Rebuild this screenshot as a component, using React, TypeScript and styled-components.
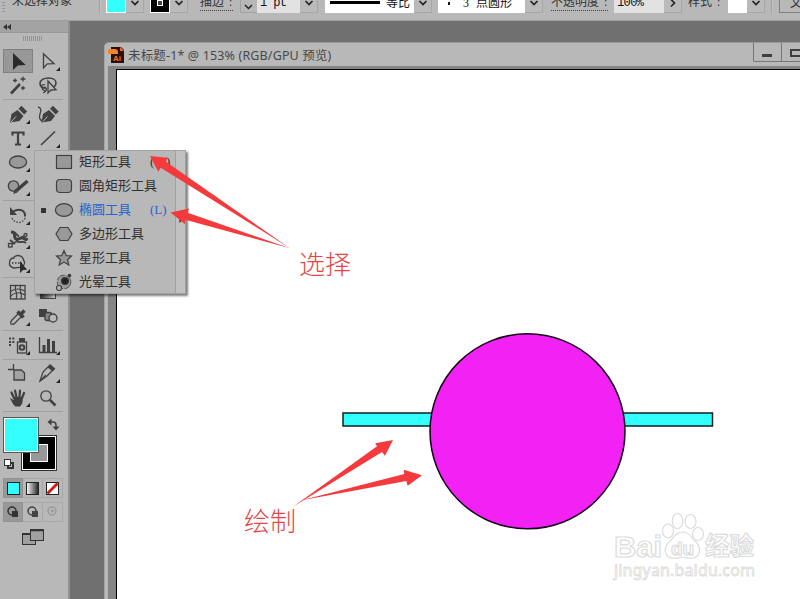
import React from "react";
import styled, { createGlobalStyle } from "styled-components";

const INK = "#404040";
const PANEL = "#b8b8b8";
const CYAN = "#33ffff";
const SONG = `"Liberation Serif", "Noto Sans CJK SC", serif`;

const GlobalStyle = createGlobalStyle`
  * { box-sizing: border-box; }
  body { margin: 0; background: #707070; overflow: hidden; }
  svg { display: block; flex: none; }
`;

const Screen = styled.div`
  position: relative;
  display: flex;
  flex-direction: column;
  width: 800px;
  height: 599px;
  overflow: hidden;
  background: #707070;
  color: #333;
  font-family: "Noto Sans", "Noto Sans CJK SC", sans-serif;
`;

/* ---------- options bar ---------- */

const OptionsBar = styled.header`
  display: flex;
  align-items: flex-end;
  flex: none;
  height: 21px;
  padding-bottom: 7px;
  overflow: hidden;
  background: ${PANEL};
  border-bottom: 1px solid #a0a0a0;
`;

const BarGrip = styled.div`
  flex: none;
  width: 3px;
  height: 20px;
  margin: 0 7px 0 2px;
  background: repeating-linear-gradient(#929292 0 1px, transparent 1px 3px);
`;

const BarText = styled.span<{ $w: number; $gap?: number; $lift?: number; $dotted?: boolean }>`
  flex: none;
  width: ${(p) => p.$w}px;
  height: 19px;
  margin-left: ${(p) => p.$gap ?? 0}px;
  margin-bottom: ${(p) => p.$lift ?? 2}px;
  border-bottom: ${(p) => (p.$dotted ? "1px dotted #444" : "0")};
  font: 12px/20px ${SONG};
  word-spacing: 2px;
  white-space: nowrap;
`;

const BarDivider = styled.div<{ $gap: number }>`
  flex: none;
  width: 2px;
  height: 22px;
  margin: 0 0 -1px ${(p) => p.$gap}px;
  background: #a2a2a2;
  border-right: 1px solid #c0c0c0;
`;

const Swatch = styled.div<{ $gap: number; $color: string }>`
  display: flex;
  align-items: center;
  justify-content: center;
  flex: none;
  width: 20px;
  height: 20px;
  margin-left: ${(p) => p.$gap}px;
  background: ${(p) => p.$color};
  border: 1px solid #fff;
`;

const StrokeHole = styled.div`
  width: 6px;
  height: 6px;
  background: #444;
  border: 1px solid #fff;
`;

const ArrowBox = styled.div`
  display: flex;
  align-items: center;
  justify-content: center;
  flex: none;
  width: 18px;
  height: 21px;
  background: #bababa;
  border: 1px solid #a6a6a6;
  border-left: 0;
`;

const Field = styled.div<{ $w: number; $gap?: number; $bg?: string }>`
  display: flex;
  align-items: center;
  flex: none;
  width: ${(p) => p.$w}px;
  height: 20px;
  margin-left: ${(p) => p.$gap ?? 0}px;
  background: ${(p) => p.$bg ?? "#fff"};
  color: #111;
  font: 12px/18px ${SONG};
  white-space: pre;
`;

const MonoValue = styled.span<{ $pad: number }>`
  padding: 0 0 0 ${(p) => p.$pad}px;
  font-family: "Liberation Mono", monospace;
  font-size: 12px;
  letter-spacing: -0.6px;
`;

const BrushLine = styled.div`
  width: 50px;
  height: 3px;
  margin: 0 6px 1px 5px;
  background: #000;
`;

const FieldText = styled.span<{ $gap?: number }>`
  margin: 0 0 1px ${(p) => p.$gap ?? 0}px;
`;

const Dot = styled.span`
  width: 2px;
  height: 3px;
  margin-left: 10px;
  background: #111;
`;

const EdgeButton = styled.div`
  flex: none;
  width: 30px;
  height: 21px;
  margin-left: 6px;
  padding-left: 10px;
  border: 1px solid #808080;
  font: 12px/20px ${SONG};
`;

/* ---------- tool panel ---------- */

const Body = styled.div`
  display: flex;
  flex: 1;
  min-height: 0;
`;

const ToolPanel = styled.aside`
  display: flex;
  flex-direction: column;
  flex: none;
  width: 70px;
  background: ${PANEL};
  border-right: 2px solid #909090;
`;

const PanelHeader = styled.div`
  display: flex;
  align-items: center;
  height: 12px;
  padding-left: 3px;
  background: #a3a3a3;
  border-bottom: 1px solid #999;
`;

const PanelGrip = styled.div`
  width: 19px;
  height: 5px;
  margin: 3px 0 8px 23px;
  background: repeating-linear-gradient(90deg, #939393 0 1px, transparent 1px 2px);
`;

const ToolGroup = styled.div`
  display: grid;
  grid-template-columns: 30px 30px;
  grid-auto-rows: 24px;
  margin-left: 3px;
`;

const ToolCell = styled.div<{ $active?: boolean }>`
  background: ${(p) => (p.$active ? "#989898" : "transparent")};
  box-shadow: ${(p) => (p.$active ? "inset 0 0 0 1px #808080" : "none")};
`;

const Rule = styled.div<{ $h: number }>`
  flex: none;
  width: 60px;
  height: ${(p) => p.$h}px;
  margin-left: 3px;
  background: linear-gradient(#a0a0a0, #a0a0a0) 0 2px / 100% 1px no-repeat;
`;

const ModeRow = styled.div`
  display: flex;
  flex: none;
  height: 20px;
  margin: 0 0 4px 3px;
`;

const ModeButton = styled.div<{ $active?: boolean }>`
  display: flex;
  align-items: center;
  justify-content: center;
  width: 20px;
  border: 1px solid ${(p) => (p.$active ? "#929292" : "#a9a9a9")};
  border-left-width: ${(p) => (p.$active ? 1 : 0)}px;
  background: ${(p) => (p.$active ? "#989898" : "transparent")};
`;

const ScreenMode = styled.div`
  margin: 3px 0 0 22px;
`;

/* ---------- document window ---------- */

const Workspace = styled.main`
  display: flex;
  flex: 1;
  min-width: 0;
  padding: 21px 0 0 34px;
`;

const DocWindow = styled.section`
  display: flex;
  flex-direction: column;
  flex: 1;
  background: ${PANEL};
  border-top: 1px solid #989898;
  border-left: 1px solid #a4a4a4;
  border-top-left-radius: 5px;
  overflow: hidden;
`;

const TitleBar = styled.div`
  display: flex;
  align-items: flex-start;
  flex: none;
  height: 23px;
  padding-left: 3px;
`;

const TitleIcon = styled.svg`
  margin-top: 1px;
`;

const Title = styled.h1`
  flex: 1;
  margin: 3px 0 0 3px;
  color: #484848;
  font-size: 12.5px;
  font-weight: 400;
  line-height: 20px;
  letter-spacing: 0.15px;
  white-space: nowrap;
`;

const WindowControls = styled.div`
  display: flex;
  width: 47px;
  height: 19px;
  border: 1px solid #777;
  border-width: 0 0 1px 1px;
  border-bottom-left-radius: 2px;
`;

const ControlCell = styled.div`
  width: 28px;
  border-right: 1px solid #777;
`;

const Canvas = styled.div`
  flex: 1;
  margin-left: 3px;
  padding: 3px 0 0 8px;
  background: #858585;
`;

const Artboard = styled.div`
  width: 684px;
  height: 532px;
  background: #fff;
  border: 1px solid #000;
  border-width: 1px 0 0 1px;
`;

/* ---------- floating parts ---------- */

const Flyout = styled.div`
  position: absolute;
  left: 34px;
  top: 150px;
  display: flex;
  width: 152px;
  height: 144px;
  background: ${PANEL};
  border: 1px solid #a2a2a2;
  box-shadow: 2px 2px 2px rgba(0, 0, 0, 0.5);
`;

const FlyoutList = styled.ul`
  flex: 1;
  margin: -1px 0 0;
  padding: 0;
  list-style: none;
`;

const FlyoutItem = styled.li<{ $active?: boolean }>`
  display: flex;
  align-items: center;
  height: 24px;
  color: ${(p) => (p.$active ? "#2a62cf" : "#303030")};
  font: 13px/24px ${SONG};
  white-space: nowrap;
`;

const Marker = styled.span<{ $on?: boolean }>`
  width: 5px;
  height: 5px;
  margin: 0 8px 0 6px;
  background: ${(p) => (p.$on ? "#333" : "transparent")};
`;

const ToolName = styled.span`
  margin-left: 5px;
`;

const Shortcut = styled.span`
  margin-left: 19px;
`;

const TearOff = styled.div`
  width: 10px;
  background: #c1c1c1;
  border-left: 1px solid #a0a0a0;
`;

const Arrows = styled.svg`
  position: absolute;
  left: 0;
  top: 0;
  pointer-events: none;
`;

const Note = styled.div<{ $x: number; $y: number }>`
  position: absolute;
  left: ${(p) => p.$x}px;
  top: ${(p) => p.$y}px;
  color: #e54545;
  font: 300 26px/30px "Noto Sans CJK SC", sans-serif;
  white-space: nowrap;
`;

const Watermark = styled.div`
  position: absolute;
  left: 608px;
  top: 508px;
`;

const Chevron = () => (
  <svg width="10" height="8" viewBox="0 0 10 8">
    <path d="M1.500 2 5 5.500 8.500 2" fill="none" stroke="#222" strokeWidth="1.700" />
  </svg>
);

const Corner = () => <path d="M27 18v4h-4z" fill="#222" />;

type IconProps = { children?: React.ReactNode; corner?: boolean };
const Icon = ({ children, corner }: IconProps) => (
  <svg width="30" height="24" viewBox="0 0 30 24" fill="none" stroke={INK} strokeWidth="1.300">
    {children}
    {corner && <g stroke="none"><Corner /></g>}
  </svg>
);

const PenNib = () => (
  <>
    <path d="M7 20.500 8.500 12l6-4 6 6-4 5z" fill={INK} stroke="none" />
    <path d="m15.500 6.800 3-3 5.700 5.700-3 3z" fill={INK} stroke="none" />
    <path d="m8 20 5-5.500" stroke={PANEL} strokeWidth="1" />
  </>
);

const groups: { gap: number; tools: React.ReactNode[] }[] = [
  {
    gap: 5,
    tools: [
      <Icon><path d="M10 4v17l4.700-4.500 8-.5z" fill="#2b2b2b" stroke="none" /></Icon>,
      <Icon corner><path d="M10.500 4.800v14l3.800-3.900 6.700-.2z" /></Icon>,
      <Icon>
        <path d="M8 20.500 17 11" strokeWidth="2.600" />
        <path d="M12 5.500v4M10 7.500h4M20 3.500v5M17.500 6h5M20 13v4M18 15h4" />
      </Icon>,
      <Icon>
        <path d="M13 14.500c-4 .7-6-1.200-6-4C7 7 11 5 15.500 5s7.500 2 7.500 5c0 2-1 3-2 3.500" strokeWidth="1.600" />
        <path d="M12 12c-4-2-5 4-1 3s2.500 4-1 5M9 16l3 2" />
        <path d="M15 8v12l3-3 5-.3z" fill={PANEL} />
      </Icon>,
    ],
  },
  {
    gap: 5,
    tools: [
      <Icon corner><PenNib /></Icon>,
      <Icon>
        <g transform="translate(1.500)"><PenNib /></g>
        <path d="M5 5c4 1 3 4 2 7s-1 6 3 7" />
      </Icon>,
      <Icon corner><path d="M9.500 9.500V6.500h11v3M15 6.500v12M12 18.500h6" strokeWidth="2.200" /></Icon>,
      <Icon corner><path d="M8 19 22 5.500" strokeWidth="1.600" /></Icon>,
      <Icon corner><ellipse cx="15" cy="12" rx="8.600" ry="6" fill="#999" /></Icon>,
      <Icon />,
      <Icon corner>
        <circle cx="10.500" cy="12" r="5.200" fill="#999" />
        <path d="M13 17 24.500 7" strokeWidth="3.500" />
        <path d="m10 20 4.500-1.500-2.500-3z" fill={INK} stroke="none" />
      </Icon>,
      <Icon />,
    ],
  },
  {
    gap: 5,
    tools: [
      <Icon corner>
        <path d="M10 8.500c7-4 12.500-.5 12 5" strokeWidth="2" />
        <path d="M7 4v8h7z" fill={INK} stroke="none" />
        <path d="M22 15c-2 6-11 6-13.500-1" strokeDasharray="1.500 1.500" />
      </Icon>,
      <Icon />,
      <Icon corner>
        <path d="M8 5c6 0 2 6 5 7s4-2 7-1 3 3 4 0" strokeWidth="3" />
        <path d="M10 5c4 0 3 4 6 4M13 14c4 3 7-1 10 2M7 13l5 4" strokeWidth="1.800" />
        <path d="M7 19 22 8" />
        <rect x="5.500" y="16.500" width="3.500" height="3.500" fill={PANEL} /><circle cx="22.500" cy="8" r="1.500" fill={PANEL} />
      </Icon>,
      <Icon />,
      <Icon corner>
        <path d="M11 6c4-3 9-1 9.500 3 3 4-1 8-6 7.500C10 18 6 15.500 6.500 12 6.500 8.500 8 7 11 7z" />
        <path d="M9 12h10" strokeDasharray="1.500 1.500" />
        <path d="M17 10v12l3-3 4-.2z" fill="#2b2b2b" stroke="none" />
      </Icon>,
      <Icon />,
    ],
  },
  {
    gap: 5,
    tools: [
      <Icon>
        <rect x="7.500" y="5.500" width="14.500" height="13.500" />
        <path d="M7 12c5-4 9-4 15-1M7 17c4-5 10-5 15-2M13 5c-3 5 3 8 0 14M18 5c-3 5 2 9 0 14" strokeWidth="1.200" />
      </Icon>,
      <svg width="30" height="24">
        <defs><linearGradient id="mesh"><stop stopColor="#333" /><stop offset="1" stopColor="#ddd" /></linearGradient></defs>
        <rect x="7.500" y="5.500" width="15" height="13" fill="url(#mesh)" stroke={INK} />
      </svg>,
      <Icon corner>
        <path d="M8 20c-1-2 0-3 1-4l7-7 3 3-7 7c-1 1-2 2-4 1z" />
        <path d="m14.500 7.500 6 6M18 10l3.500-3.500" strokeWidth="3.500" />
      </Icon>,
      <Icon>
        <rect x="6" y="5" width="8" height="8" fill={INK} stroke="none" />
        <rect x="12" y="8.500" width="6.500" height="8" rx="2" fill="#858585" />
        <circle cx="20" cy="14" r="4" fill={PANEL} />
      </Icon>,
    ],
  },
  {
    gap: 4,
    tools: [
      <Icon corner>
        <path d="M6 5.500h6M6 9h6M6 12h2" strokeDasharray="2 1.300" strokeWidth="2" />
        <rect x="14.500" y="9" width="9" height="11" /><path d="M16 7h6" strokeWidth="4" />
        <circle cx="19" cy="14.500" r="2.300" strokeWidth="2" />
      </Icon>,
      <Icon corner><path d="M6.500 4v15.500H24" /><path d="M11 19v-7M15.500 19V6M20.500 19V8" strokeWidth="3" /></Icon>,
    ],
  },
  {
    gap: 7,
    tools: [
      <Icon><path d="M5 8.500h6M10.500 3v5" /><path d="M11 9h7.500l3 3v7H11z" fill="#a3a3a3" /></Icon>,
      <Icon corner><path d="m7 20 3-9 7-7 4 4-7 7z" /><path d="m7 20 6-6" /><path d="m16 5 5 4" strokeWidth="4" /></Icon>,
      <Icon corner>
        <path d="M11 13 8.500 7.500M13.500 12 12 5.500M16.500 12l.5-6.500M19 13l2-5" strokeWidth="2.200" strokeLinecap="round" />
        <path d="m7 13 4 2v-3h8.500c1 5-1 9-3 9.500h-4C10 20 9 17 7 13z" fill={INK} stroke="none" />
      </Icon>,
      <Icon><circle cx="13" cy="11" r="5.200" /><path d="m17 15 5.500 5.500" strokeWidth="2.600" /></Icon>,
    ],
  },
];

const FillStroke = () => (
  <svg width="66" height="62" viewBox="0 416 66 62">
    <rect x="21.500" y="435.500" width="35" height="35" fill="#000" stroke="#333" />
    <rect x="22.500" y="436.500" width="33" height="33" fill="none" stroke="#fff" />
    <rect x="30.500" y="444.500" width="17" height="17" fill="#989898" stroke="#fff" />
    <rect x="3.500" y="417.500" width="35" height="35" fill={CYAN} stroke="#555" />
    <rect x="4.500" y="418.500" width="33" height="33" fill="none" stroke="#fff" />
    <path d="M50 422h3q3 0 3 3v3" fill="none" stroke={INK} strokeWidth="1.500" />
    <path d="m47.500 422 4-3.500v7zM52.500 426.500h7L56 430.500z" fill={INK} />
    <rect x="8" y="463" width="5" height="5" fill="none" stroke="#333" strokeWidth="2" />
    <rect x="4.500" y="459.500" width="6" height="6" fill="#fff" stroke="#333" />
  </svg>
);

const ModeGlyph = ({ color, solid }: { color: string; solid?: boolean }) => (
  <svg width="14" height="14">
    <circle cx="6" cy="6" r="4" fill="none" stroke={color} strokeWidth="1.500" />
    {solid ? <rect x="6" y="6" width="6" height="6" fill={color} /> : <circle cx="6.500" cy="6" r="1.500" fill={color} />}
  </svg>
);

const shapeTools: { name: string; shortcut?: string; active?: boolean; icon: React.ReactNode }[] = [
  { name: "矩形工具", shortcut: "(M)", icon: <rect x="2.500" y="4.500" width="15" height="13" /> },
  { name: "圆角矩形工具", icon: <rect x="2.500" y="4.500" width="15" height="13" rx="3.500" /> },
  { name: "椭圆工具", shortcut: "(L)", active: true, icon: <ellipse cx="10" cy="11" rx="8.600" ry="6.300" /> },
  { name: "多边形工具", icon: <path d="M2 11 6 4.500h8L18 11l-4 6.500H6z" /> },
  { name: "星形工具", icon: <path d="m10 3.500 2.200 5.200 5.300.3-4 3.700 1.300 5.300-4.800-2.900L5.200 18l1.300-5.300-4-3.700 5.300-.3z" /> },
  {
    name: "光晕工具",
    icon: (
      <>
        <circle cx="10" cy="11" r="6.800" strokeWidth=".8" strokeDasharray="10 1.500" />
        <circle cx="11" cy="10" r="3.500" fill="#222" />
        <circle cx="15.500" cy="4.500" r="1.200" fill="#222" />
        <circle cx="5" cy="17" r="2.500" fill={PANEL} />
      </>
    ),
  },
];

export default function App() {
  return (
    <Screen>
      <GlobalStyle />
      <OptionsBar>
        <BarGrip />
        <BarText $w={60}  $lift={3}>未选择对象</BarText>
        <BarDivider $gap={27} />
        <Swatch $gap={5} $color={CYAN} />
        <ArrowBox><Chevron /></ArrowBox>
        <Swatch $gap={6} $color="#000"><StrokeHole /></Swatch>
        <ArrowBox><Chevron /></ArrowBox>
        <BarText $w={33} $gap={12} $dotted>描边 :</BarText>
        <svg width="24" height="21">
          <path d="M7.500 0v20.500h17" fill="none" stroke="#a2a2a2" />
          <path d="M12 7.500 15.500 4 19 7.500M12 13l3.500 3.500L19 13" fill="none" stroke="#222" strokeWidth="1.500" />
        </svg>
        <Field $w={43} $bg="#e2e2e2"><MonoValue $pad={3}>1 pt</MonoValue></Field>
        <ArrowBox><Chevron /></ArrowBox>
        <Field $w={89} $gap={7}><BrushLine /><FieldText>等比</FieldText></Field>
        <ArrowBox><Chevron /></ArrowBox>
        <Field $w={87} $gap={6}>
          <Dot /><FieldText $gap={13}>3</FieldText><FieldText $gap={7}>点圆形</FieldText>
        </Field>
        <ArrowBox><Chevron /></ArrowBox>
        <BarText $w={57} $gap={8} $dotted>不透明度 :</BarText>
        <Field $w={50} $gap={6} $bg="#e2e2e2"><MonoValue $pad={3}>100%</MonoValue></Field>
        <ArrowBox>
          <svg width="8" height="10"><path d="M2 1.500 5.500 5 2 8.500" fill="none" stroke="#222" strokeWidth="1.600" /></svg>
        </ArrowBox>
        <BarText $w={34} $gap={6}>样式 :</BarText>
        <Field $w={19} $gap={6} />
        <ArrowBox><Chevron /></ArrowBox>
        <BarDivider $gap={6} />
        <EdgeButton>文</EdgeButton>
      </OptionsBar>

      <Body>
        <ToolPanel>
          <PanelHeader>
            <svg width="9" height="6"><path d="M4 0v6L0 3zM8 0v6L4 3z" fill="#333" /></svg>
          </PanelHeader>
          <PanelGrip />
          {groups.map((group, g) => (
            <React.Fragment key={g}>
              <ToolGroup>
                {group.tools.map((tool, i) => (
                  <ToolCell key={i} $active={g === 0 && i === 0}>{tool}</ToolCell>
                ))}
              </ToolGroup>
              <Rule $h={group.gap} />
            </React.Fragment>
          ))}
          <FillStroke />
          <ModeRow>
            <ModeButton $active>
              <svg width="13" height="13"><rect x=".5" y=".5" width="12" height="12" fill={CYAN} stroke="#222" /></svg>
            </ModeButton>
            <ModeButton>
              <svg width="13" height="13">
                <defs><linearGradient id="ramp"><stop stopColor="#fff" /><stop offset="1" stopColor="#222" /></linearGradient></defs>
                <rect x=".5" y=".5" width="12" height="12" fill="url(#ramp)" stroke="#222" />
              </svg>
            </ModeButton>
            <ModeButton>
              <svg width="13" height="13">
                <rect x=".5" y=".5" width="12" height="12" fill="#fff" stroke="#222" />
                <path d="M1.500 11.500 11.500 1.500" stroke="#d01818" strokeWidth="2.800" />
              </svg>
            </ModeButton>
          </ModeRow>
          <ModeRow>
            <ModeButton $active><ModeGlyph color="#333" solid /></ModeButton>
            <ModeButton><ModeGlyph color="#444" solid /></ModeButton>
            <ModeButton><ModeGlyph color="#9b9b9b" /></ModeButton>
          </ModeRow>
          <ScreenMode>
            <svg width="23" height="17" fill="#a0a0a0" stroke="#333">
              <rect x=".5" y="4.500" width="13" height="11" /><path d="M0 5h14" strokeWidth="2" />
              <rect x="8.500" y=".5" width="13" height="11" /><path d="M8 1h14" strokeWidth="2.500" />
            </svg>
          </ScreenMode>
        </ToolPanel>

        <Workspace>
          <DocWindow>
            <TitleBar>
              <TitleIcon width="17" height="20" viewBox="0 0 17 20">
                <path d="M3 3h10l3 3v13H3z" fill="#291008" />
                <path d="M0 5h8l2 2v3H0z" fill="#f5852a" /><path d="m12 3 4 4h-4z" fill="#ee6a2c" />
                <text x="5" y="17" fill="#f47523" fontFamily="Liberation Sans, sans-serif" fontSize="8" fontWeight="700">Ai</text>
              </TitleIcon>
              <Title>未标题-1* @ 153% (RGB/GPU 预览)</Title>
              <WindowControls>
                <ControlCell>
                  <svg width="27" height="18"><rect x="8" y="11" width="10" height="3" fill={INK} /></svg>
                </ControlCell>
                <svg width="18" height="18"><rect x="9" y="7" width="10" height="6" fill="none" stroke={INK} strokeWidth="2" /></svg>
              </WindowControls>
            </TitleBar>
            <Canvas>
              <Artboard>
                <svg width="683" height="529" viewBox="117 70 683 529" stroke="#102020" strokeWidth="1.500">
                  <rect x="343" y="413" width="369.500" height="13" fill={CYAN} />
                  <circle cx="527.500" cy="431.300" r="97.500" fill="#f222f5" stroke="#170018" />
                </svg>
              </Artboard>
            </Canvas>
          </DocWindow>
        </Workspace>
      </Body>

      <Flyout>
        <FlyoutList>
          {shapeTools.map((tool) => (
            <FlyoutItem key={tool.name} $active={tool.active}>
              <Marker $on={tool.active} />
              <svg width="20" height="22" fill="#999" stroke="#404040" strokeWidth="1.200">{tool.icon}</svg>
              <ToolName>{tool.name}</ToolName>
              {tool.shortcut && <Shortcut>{tool.shortcut}</Shortcut>}
            </FlyoutItem>
          ))}
        </FlyoutList>
        <TearOff />
      </Flyout>

      <Watermark>
        <svg width="160" height="76" viewBox="608 508 160 76" fill="#fff" stroke="#dcdcdc" strokeWidth="1.200">
          <text x="614" y="557" fontFamily="Liberation Sans, sans-serif" fontWeight="700" fontSize="30" textLength="48" lengthAdjust="spacingAndGlyphs">Bai</text>
          <ellipse cx="668" cy="531" rx="5.500" ry="7" /><ellipse cx="677.500" cy="521" rx="5.200" ry="7.500" />
          <ellipse cx="690.500" cy="521.500" rx="5.500" ry="7" /><ellipse cx="698" cy="534" rx="5.500" ry="6.500" />
          <path d="M683 532c7 0 8 6 13 10 6 6 4 15-3 16-4 1-7-1-10-1s-6 2-11 1c-7-1-9-9-4-15 5-4 7-11 15-11z" />
          <text x="671" y="555" fontFamily="Liberation Sans, sans-serif" fontWeight="700" fontSize="19" textLength="23">du</text>
          <text x="705" y="555" fontFamily="Noto Sans CJK SC, sans-serif" fontWeight="700" fontSize="24.500" textLength="49">经验</text>
          <text x="614" y="576" fontFamily="Noto Sans, sans-serif" fontSize="16" strokeWidth=".8" textLength="141">jingyan.baidu.com</text>
        </svg>
      </Watermark>

      <Arrows width="800" height="599" fill="#f43a3c">
        <path d="M179.500 216v7l3.500-3.500z" fill="#222" />
        <path d="m150 156 17.500 1.700-1.500 4L290 248.300l-129.300-80.600-2.400 4z" />
        <path d="m170.500 212.500 18.500-4-1.300 4.200L290 248.300l-104.700-28.600-.3 4.500z" />
        <path d="m393 440-17.700 3.300 1.700 3-84 60.400 89-54.700 3 3.700z" />
        <path d="m422 475.300-18.300-5.600.6 4.300-102.600 26.300L406.300 481l1.400 4.700z" />
      </Arrows>
      <Note $x={299} $y={248}>选择</Note>
      <Note $x={244} $y={505}>绘制</Note>
    </Screen>
  );
}
